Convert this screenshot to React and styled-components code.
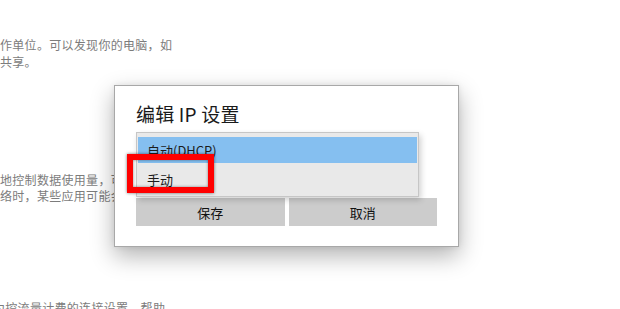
import React from 'react'
import styled, { createGlobalStyle } from 'styled-components'

const GlobalStyle = createGlobalStyle`
  html, body {
    margin: 0;
    padding: 0;
    background: #ffffff;
    overflow: hidden;
  }
  body {
    font-family: "Noto Sans CJK SC", "Noto Sans", sans-serif;
  }
`

const Page = styled.div`
  position: relative;
  width: 620px;
  height: 309px;
  overflow: hidden;
  background: #ffffff;
`

const Column = styled.div`
  width: 320px;
  padding-top: 36px;
  display: flex;
  flex-direction: column;
`

const Para = styled.p`
  margin: 0;
  margin-top: ${props => props.gap || 0}px;
  font-size: 12px;
  line-height: ${props => props.lh || 17}px;
  letter-spacing: 0.3px;
  color: #7c7c7c;
  white-space: nowrap;
  text-indent: ${props => props.indent || 0}px;
`

const Dialog = styled.div`
  position: absolute;
  left: 114px;
  top: 85px;
  width: 345px;
  box-sizing: border-box;
  padding: 16px 21px 20px;
  background: #ffffff;
  border: 1px solid #a8a8a8;
  box-shadow: 0 9px 22px rgba(0, 0, 0, 0.3), 0 0 6px rgba(0, 0, 0, 0.08);
  display: flex;
  flex-direction: column;
`

const Title = styled.h2`
  margin: 0;
  font-size: 19px;
  line-height: 24px;
  font-weight: 400;
  color: #1a1a1a;
  letter-spacing: 0.2px;
`

const List = styled.div`
  margin-top: 6px;
  width: 283px;
  box-sizing: border-box;
  border: 1px solid #c6c6c6;
  background: #e9e9e9;
  padding: 4px 1px 0;
  box-shadow: 2px 3px 6px rgba(0, 0, 0, 0.18);
  display: flex;
  flex-direction: column;
  position: relative;
  z-index: 1;
`

const Option = styled.div`
  height: ${props => (props.selected ? 26 : 33)}px;
  display: flex;
  align-items: center;
  padding-left: 9px;
  font-size: 13px;
  color: #1c1c1c;
  background: ${props => (props.selected ? '#85bff0' : 'transparent')};
`

const Buttons = styled.div`
  margin-top: 1px;
  display: grid;
  grid-template-columns: 1fr 1fr;
  gap: 4px;
`

const Button = styled.div`
  height: 28px;
  display: flex;
  align-items: center;
  justify-content: center;
  background: #cccccc;
  font-size: 13px;
  color: #111111;
`

const Highlight = styled.div`
  position: absolute;
  left: 127px;
  top: 154px;
  width: 87px;
  height: 39px;
  box-sizing: border-box;
  border: 6px solid #ff0000;
  box-shadow: 0 0 3px rgba(0, 0, 0, 0.55), inset 0 0 3px rgba(0, 0, 0, 0.45);
  z-index: 2;
`

export default function App() {
  return (
    <Page>
      <GlobalStyle />
      <Column>
        <Para>作单位。可以发现你的电脑，如</Para>
        <Para>共享。</Para>
        <Para gap={102} lh={16}>地控制数据使用量，可将此连接设置为</Para>
        <Para lh={16}>络时，某些应用可能会以不同的方式</Para>
        <Para gap={95} indent={-7}>为控流量计费的连接设置，帮助</Para>
      </Column>

      <Dialog>
        <Title>编辑 IP 设置</Title>
        <List>
          <Option selected>自动(DHCP)</Option>
          <Option>手动</Option>
        </List>
        <Buttons>
          <Button>保存</Button>
          <Button>取消</Button>
        </Buttons>
      </Dialog>

      <Highlight />
    </Page>
  )
}
